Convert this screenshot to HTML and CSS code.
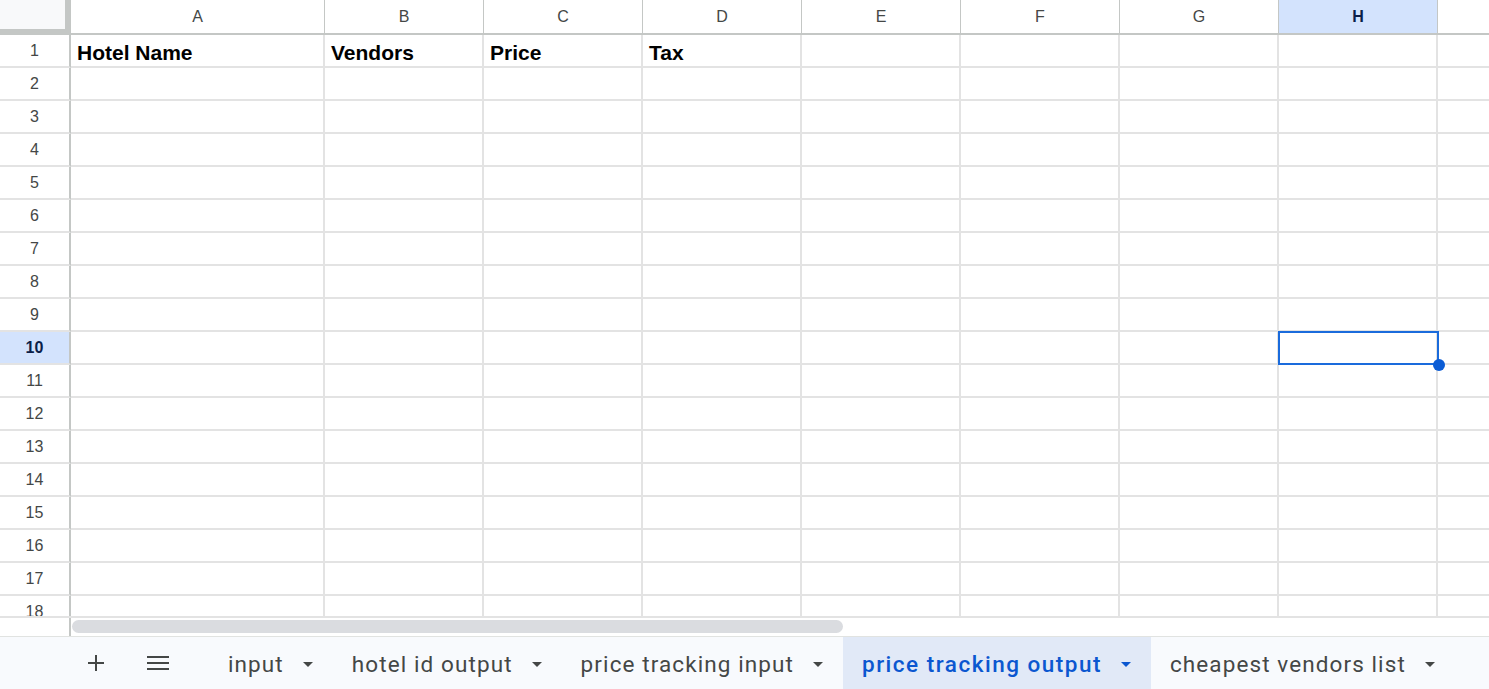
FILE: index.html
```html
<!DOCTYPE html>
<html lang="en">
<head>
    <meta charset="UTF-8">
    <meta name="viewport" content="width=device-width, initial-scale=1.0">
    <title>Hotel prices</title>
    <link rel="stylesheet" href="styles.css">
</head>
<body>
    <div id="sheet">
        <div id="grid">
            <div class="row header-row">
                <div class="corner"></div>
                <div class="col-head">A</div>
                <div class="col-head">B</div>
                <div class="col-head">C</div>
                <div class="col-head">D</div>
                <div class="col-head">E</div>
                <div class="col-head">F</div>
                <div class="col-head">G</div>
                <div class="col-head active">H</div>
                <div class="col-head"></div>
            </div>
            <div class="row">
                <div class="row-head">1</div>
                <div class="cell bold">Hotel Name</div>
                <div class="cell bold">Vendors</div>
                <div class="cell bold">Price</div>
                <div class="cell bold">Tax</div>
                <div class="cell"></div>
                <div class="cell"></div>
                <div class="cell"></div>
                <div class="cell"></div>
                <div class="cell"></div>
            </div>
        </div>

        <div id="scroll-strip">
            <div class="strip-head"></div>
            <div class="thumb"></div>
        </div>

        <div id="tabs-bar">
            <button class="bar-btn" title="Add sheet">
                <svg width="18" height="18" viewBox="0 0 18 18"><path d="M9 1v16M1 9h16" stroke="#444746" stroke-width="2"/></svg>
            </button>
            <button class="bar-btn" title="All sheets">
                <svg width="22" height="16" viewBox="0 0 22 16"><path d="M0 2h22M0 8h22M0 14h22" stroke="#444746" stroke-width="2"/></svg>
            </button>
            <div class="tabs">
                <div class="tab">input<span class="caret"></span></div>
                <div class="tab">hotel id output<span class="caret"></span></div>
                <div class="tab">price tracking input<span class="caret"></span></div>
                <div class="tab current">price tracking output<span class="caret"></span></div>
                <div class="tab">cheapest vendors list<span class="caret"></span></div>
            </div>
        </div>
    </div>

    <script>
        // empty rows 2..18, row 10 holds the selected cell in column H
        const grid = document.getElementById('grid');
        for (let r = 2; r <= 18; r++) {
            const row = document.createElement('div');
            row.className = 'row';
            const head = document.createElement('div');
            head.className = 'row-head' + (r === 10 ? ' active' : '');
            head.textContent = r;
            row.appendChild(head);
            for (let c = 0; c < 9; c++) {
                const cell = document.createElement('div');
                cell.className = 'cell';
                if (r === 10 && c === 7) {
                    const sel = document.createElement('div');
                    sel.className = 'selection';
                    cell.appendChild(sel);
                }
                row.appendChild(cell);
            }
            grid.appendChild(row);
        }
    </script>
</body>
</html>
```

FILE: styles.css
```css
body {
    margin: 0;
    font-family: 'Liberation Sans', Arial, sans-serif;
    background-color: #fff;
    overflow: hidden;
}

#sheet {
    height: 689px;
    display: flex;
    flex-direction: column;
}

#grid {
    height: 616px;
    overflow: hidden;
    flex-shrink: 0;
}

.row {
    display: grid;
    grid-template-columns: 71px 254px repeat(7, 159px) 1fr;
    height: 33px;
}

.header-row {
    height: 35px;
}

.corner {
    background-color: #f8f9fa;
    border-right: 6px solid #c4c7c5;
    border-bottom: 6px solid #c4c7c5;
    box-sizing: border-box;
}

.col-head {
    display: flex;
    justify-content: center;
    align-items: center;
    font-size: 16px;
    color: #444746;
    border-right: 1px solid #c4c7c5;
    border-bottom: 2px solid #c4c7c5;
    box-sizing: border-box;
    padding-top: 1px;
}

.col-head:last-child {
    border-right: none;
}

.row-head {
    display: flex;
    justify-content: center;
    align-items: center;
    font-size: 16px;
    color: #444746;
    border-right: 2px solid #c4c7c5;
    border-bottom: 2px solid #e3e3e3;
    box-sizing: border-box;
    padding-top: 1px;
}

.col-head.active,
.row-head.active {
    background-color: #d3e3fd;
    color: #0b1f49;
    font-weight: bold;
}

.cell {
    position: relative;
    display: flex;
    align-items: flex-end;
    padding: 0 5px 3px 6px;
    line-height: 20px;
    font-size: 21px;
    color: #000;
    border-right: 2px solid #e3e3e3;
    border-bottom: 2px solid #e3e3e3;
    box-sizing: border-box;
    white-space: nowrap;
}

.cell:last-child {
    border-right: none;
}

.bold {
    font-weight: bold;
}

.selection {
    position: absolute;
    z-index: 2;
    left: -1px;
    top: -1px;
    width: 161px;
    height: 34px;
    border: 2px solid #1a6bdc;
    box-sizing: border-box;
}

.selection::after {
    content: '';
    position: absolute;
    right: -8px;
    bottom: -8px;
    width: 12px;
    height: 12px;
    border-radius: 50%;
    background-color: #0b5cd5;
}

#scroll-strip {
    height: 21px;
    display: flex;
    align-items: flex-start;
    border-top: 2px solid #e3e3e3;
    border-bottom: 1px solid #e1e3e1;
    box-sizing: border-box;
}

.strip-head {
    width: 69px;
    height: 100%;
    border-right: 2px solid #c4c7c5;
    margin-right: 1px;
}

.thumb {
    margin-top: 2px;
    width: 771px;
    height: 13px;
    border-radius: 7px;
    background-color: #dadce0;
}

#tabs-bar {
    flex: 1;
    display: flex;
    align-items: center;
    background-color: #f8fafd;
    padding-left: 76px;
}

.bar-btn {
    width: 40px;
    height: 40px;
    display: flex;
    justify-content: center;
    align-items: center;
    border: none;
    background: none;
    padding: 0;
    margin-right: 22px;
}

.tabs {
    display: flex;
    align-self: stretch;
    margin-left: 9px;
}

.tab {
    display: flex;
    align-items: center;
    padding: 2px 20px 0 19px;
    font-family: Roboto, sans-serif;
    font-size: 22.5px;
    letter-spacing: 1.1px;
    color: #444746;
    white-space: nowrap;
}

.tab.current {
    background-color: #e1e9f7;
    color: #0b57d0;
    font-weight: 500;
    letter-spacing: 1.5px;
}

.caret {
    margin-left: 19px;
    width: 0;
    height: 0;
    border-left: 5px solid transparent;
    border-right: 5px solid transparent;
    border-top: 5px solid #444746;
}

.tab.current .caret {
    border-top-color: #0b57d0;
}
```
